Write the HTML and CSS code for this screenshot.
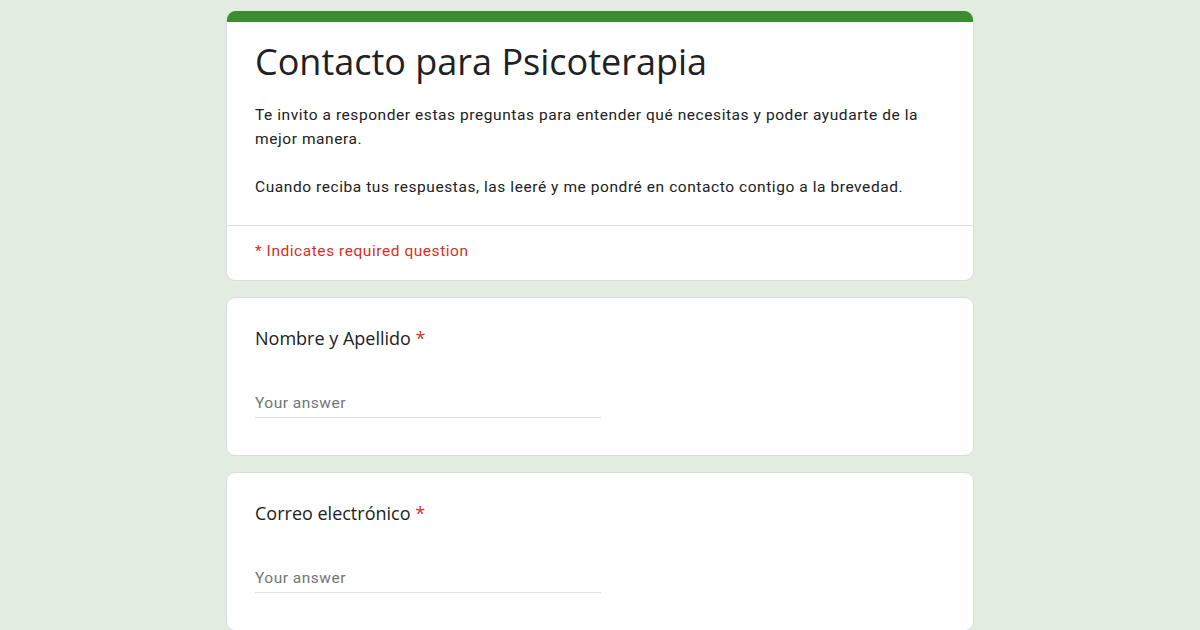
FILE: index.html
```html
<!DOCTYPE html>
<html lang="es">
<head>
<meta charset="utf-8">
<title>Contacto para Psicoterapia</title>
<link rel="stylesheet" href="styles.css">
</head>
<body>
<main class="form">
  <section class="card header-card">
    <div class="accent"></div>
    <div class="header-body">
      <h1 class="form-title">Contacto para Psicoterapia</h1>
      <div class="description">
        <p>Te invito a responder estas preguntas para entender qué necesitas y poder ayudarte de la mejor manera.</p>
        <p>Cuando reciba tus respuestas, las leeré y me pondré en contacto contigo a la brevedad.</p>
      </div>
    </div>
    <div class="required-note">* Indicates required question</div>
  </section>

  <section class="card question">
    <div class="q-title">Nombre y Apellido <span class="star">*</span></div>
    <div class="answer">Your answer</div>
  </section>

  <section class="card question">
    <div class="q-title">Correo electrónico <span class="star">*</span></div>
    <div class="answer">Your answer</div>
  </section>
</main>
</body>
</html>
```

FILE: styles.css
```css
* { box-sizing: border-box; }

html, body {
  margin: 0;
  padding: 0;
  background: #e2ede0;
  height: 630px;
  overflow: hidden;
}

body {
  font-family: Roboto, "Liberation Sans", Arial, sans-serif;
  color: #202124;
}

.form {
  width: 748px;
  margin: 11px auto 0;
  display: flex;
  flex-direction: column;
  gap: 16px;
}

.card {
  background: #ffffff;
  border: 1px solid #dadce0;
  border-radius: 9px;
  overflow: hidden;
}

.header-card {
  border-top: none;
}

.accent {
  height: 11px;
  background: #3c8d2f;
  margin: 0 -1px;
}

.header-body {
  padding: 16px 28px 26px;
  border-bottom: 1px solid #e0e0e0;
}

.form-title {
  margin: 0;
  font-family: "Open Sans", Roboto, sans-serif;
  font-weight: 400;
  font-size: 36px;
  line-height: 48px;
  color: #202124;
  letter-spacing: 0;
}

.description {
  margin-top: 17px;
  font-size: 15.5px;
  line-height: 24px;
  letter-spacing: 0.57px;
}

.description p {
  margin: 0;
}

.description p + p {
  margin-top: 24px;
}

.required-note {
  padding: 13px 28px 17px;
  font-size: 15.5px;
  line-height: 24px;
  letter-spacing: 0.55px;
  color: #d93025;
}

.question {
  padding: 26px 28px 36px;
  min-height: 159px;
}

.q-title {
  font-family: "Open Sans", Roboto, sans-serif;
  font-size: 18px;
  line-height: 28px;
  color: #202124;
}

.star {
  color: #d93025;
}

.answer {
  margin-top: 31px;
  width: 346px;
  padding: 8px 0 2px;
  font-size: 15.5px;
  line-height: 24px;
  letter-spacing: 0.5px;
  color: #70757a;
  border-bottom: 1px solid #e0e0e0;
}
```
